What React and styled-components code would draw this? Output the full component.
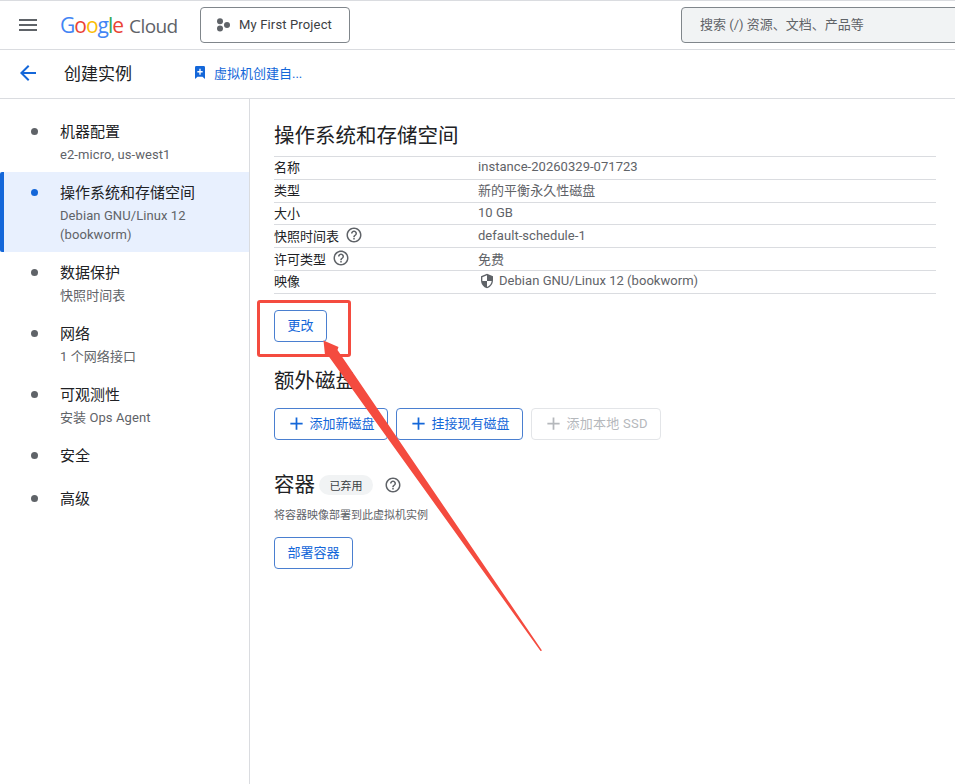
import styled, { createGlobalStyle } from "styled-components";

const FONT = `Roboto, "Noto Sans CJK SC", sans-serif`;
const BLUE = "#1467d9";

const sideItems = [
  { title: "机器配置", sub: ["e2-micro, us-west1"] },
  { title: "操作系统和存储空间", sub: ["Debian GNU/Linux 12", "(bookworm)"], active: true },
  { title: "数据保护", sub: ["快照时间表"] },
  { title: "网络", sub: ["1 个网络接口"] },
  { title: "可观测性", sub: ["安装 Ops Agent"] },
  { title: "安全" },
  { title: "高级" },
];

function HelpIcon() {
  return (
    <svg width="18" height="18" viewBox="0 0 24 24" fill="#5f6368">
      <path d="M11 18h2v-2h-2v2zm1-16C6.48 2 2 6.48 2 12s4.48 10 10 10 10-4.48 10-10S17.52 2 12 2zm0 18c-4.41 0-8-3.59-8-8s3.59-8 8-8 8 3.59 8 8-3.59 8-8 8zm0-14c-2.21 0-4 1.79-4 4h2c0-1.1.9-2 2-2s2 .9 2 2c0 2-3 1.75-3 5h2c0-2.25 3-2.5 3-5 0-2.21-1.79-4-4-4z" />
    </svg>
  );
}

function PlusIcon({ color }) {
  return (
    <PlusSvg viewBox="0 0 24 24" fill={color}>
      <path d="M19 13h-6v6h-2v-6H5v-2h6V5h2v6h6v2z" />
    </PlusSvg>
  );
}

function ShieldIcon() {
  return (
    <svg width="16" height="16" viewBox="0 0 24 24" fill="#5f6368">
      <path d="M12 1 3 5v6c0 5.55 3.84 10.74 9 12 5.16-1.26 9-6.45 9-12V5l-9-4zm0 10.99h7c-.53 4.12-3.28 7.79-7 8.94V12H5V6.3l7-3.11v8.8z" />
    </svg>
  );
}

export default function App() {
  return (
    <Page>
      <GlobalStyle />
      <TopBar>
        <MenuButton aria-label="menu">
          <svg width="18" height="12" viewBox="0 0 18 12" fill="#5f6368">
            <rect width="18" height="2" />
            <rect y="5" width="18" height="2" />
            <rect y="10" width="18" height="2" />
          </svg>
        </MenuButton>
        <Logo>
          <Letter $c="#4285f4">G</Letter>
          <Letter $c="#ea4335">o</Letter>
          <Letter $c="#fbbc04">o</Letter>
          <Letter $c="#4285f4">g</Letter>
          <Letter $c="#34a853">l</Letter>
          <Letter $c="#ea4335">e</Letter>
          <LogoCloud>Cloud</LogoCloud>
        </Logo>
        <ProjectButton>
          <svg width="14" height="14" viewBox="0 0 14 14" fill="#5f6368">
            <circle cx="4" cy="3.2" r="3" />
            <circle cx="4" cy="10.6" r="3" />
            <circle cx="11" cy="7" r="3" />
          </svg>
          My First Project
        </ProjectButton>
        <SearchBox>搜索 (/) 资源、文档、产品等</SearchBox>
      </TopBar>

      <SubBar>
        <BackIcon viewBox="0 0 24 24" fill={BLUE}>
          <path d="M20 11H7.83l5.59-5.59L12 4l-8 8 8 8 1.41-1.41L7.83 13H20v-2z" />
        </BackIcon>
        <PageTitle>创建实例</PageTitle>
        <TourLink>
          <svg width="10" height="13" viewBox="0 0 12 14" preserveAspectRatio="none" fill={BLUE}>
            <path d="M1.5 0h9A1.5 1.5 0 0 1 12 1.5V14l-3-2.4H3L0 14V1.5A1.5 1.5 0 0 1 1.5 0z" />
            <path d="M5.2 3h1.6v2.4h2.4V7H6.8v2.4H5.2V7H2.8V5.4h2.4z" fill="#fff" />
          </svg>
          虚拟机创建自...
        </TourLink>
      </SubBar>

      <Body>
        <Sidebar>
          {sideItems.map((item) => (
            <SideItem key={item.title} $active={item.active}>
              <Dot $active={item.active} />
              <div>
                <SideTitle>{item.title}</SideTitle>
                {item.sub && (
                  <SideSub>
                    {item.sub.map((line) => (
                      <div key={line}>{line}</div>
                    ))}
                  </SideSub>
                )}
              </div>
            </SideItem>
          ))}
        </Sidebar>

        <Main>
          <SectionHeading>操作系统和存储空间</SectionHeading>
          <InfoTable>
            <Row>
              <Label>名称</Label>
              <Value>instance-20260329-071723</Value>
            </Row>
            <Row>
              <Label>类型</Label>
              <Value>新的平衡永久性磁盘</Value>
            </Row>
            <Row>
              <Label>大小</Label>
              <Value>10 GB</Value>
            </Row>
            <Row>
              <Label>
                快照时间表 <HelpIcon />
              </Label>
              <Value>default-schedule-1</Value>
            </Row>
            <Row>
              <Label>
                许可类型 <HelpIcon />
              </Label>
              <Value>免费</Value>
            </Row>
            <Row>
              <Label>映像</Label>
              <ImageValue>
                <ShieldIcon />
                Debian GNU/Linux 12 (bookworm)
              </ImageValue>
            </Row>
          </InfoTable>

          <OutlineButton $mt="16px">更改</OutlineButton>

          <DiskHeading>额外磁盘</DiskHeading>
          <ButtonRow>
            <OutlineButton>
              <PlusIcon color={BLUE} />
              添加新磁盘
            </OutlineButton>
            <OutlineButton>
              <PlusIcon color={BLUE} />
              挂接现有磁盘
            </OutlineButton>
            <OutlineButton $disabled>
              <PlusIcon color="#b5b8bc" />
              <SsdText>添加本地 SSD</SsdText>
            </OutlineButton>
          </ButtonRow>

          <ContainerHead>
            <SectionTitle>容器</SectionTitle>
            <Badge>已弃用</Badge>
            <HelpIcon />
          </ContainerHead>
          <Hint>将容器映像部署到此虚拟机实例</Hint>
          <OutlineButton>部署容器</OutlineButton>
        </Main>
      </Body>

      <RedBox />
      <Arrow viewBox="0 0 955 784">
        <path
          d="M323.5 340.5 L338.5 347 L337.5 350 L542 650.5 L540.5 651 L328.5 356 L325 355 Z"
          fill="#f44b3f"
        />
      </Arrow>
    </Page>
  );
}

const GlobalStyle = createGlobalStyle`
  html, body {
    margin: 0;
    padding: 0;
    background: #fff;
    font-family: ${FONT};
    overflow: hidden;
  }
  * {
    box-sizing: border-box;
  }
`;

const Page = styled.div`
  position: relative;
  width: 955px;
  height: 784px;
  display: flex;
  flex-direction: column;
  border-top: 1px solid #dadce0;
  overflow: hidden;
`;

const TopBar = styled.header`
  height: 49px;
  flex: none;
  display: flex;
  align-items: center;
  border-bottom: 1px solid #dadce0;
`;

const MenuButton = styled.div`
  width: 56px;
  flex: none;
  padding-left: 19px;
  display: flex;
  align-items: center;
`;

const Logo = styled.div`
  width: 144px;
  flex: none;
  display: flex;
  align-items: baseline;
  font-size: 21px;
  font-family: "Open Sans", sans-serif;
  letter-spacing: -1px;
  padding-left: 4px;
`;

const Letter = styled.span`
  color: ${(p) => p.$c};
`;

const LogoCloud = styled.span`
  color: #5f6368;
  margin-left: 6px;
  font-size: 19px;
  letter-spacing: -0.6px;
`;

const ProjectButton = styled.div`
  width: 150px;
  height: 36px;
  flex: none;
  display: flex;
  align-items: center;
  gap: 9px;
  padding: 0 0 1px 15px;
  border: 1px solid #80868b;
  border-radius: 4px;
  font-size: 13px;
  letter-spacing: 0.15px;
  color: #3c4043;
`;

const SearchBox = styled.div`
  margin-left: 331px;
  width: 300px;
  height: 36px;
  flex: none;
  display: flex;
  align-items: center;
  padding: 0 0 4px 18px;
  background: #f1f3f4;
  border: 1px solid #80868b;
  border-radius: 4px;
  font-size: 13px;
  color: #5f6368;
`;

const SubBar = styled.div`
  height: 49px;
  flex: none;
  display: flex;
  align-items: center;
  padding-bottom: 3px;
  border-bottom: 1px solid #dadce0;
`;

const BackIcon = styled.svg`
  width: 24px;
  height: 24px;
  margin-left: 16px;
`;

const PageTitle = styled.h1`
  margin: 0 0 0 24px;
  width: 131px;
  font-size: 17px;
  font-weight: 400;
  color: #202124;
`;

const TourLink = styled.div`
  display: flex;
  align-items: center;
  gap: 9px;
  font-size: 13px;
  color: ${BLUE};
`;

const Body = styled.div`
  flex: 1;
  display: flex;
  min-height: 0;
`;

const Sidebar = styled.nav`
  width: 250px;
  flex: none;
  padding-top: 12px;
  border-right: 1px solid #dadce0;
`;

const SideItem = styled.div`
  position: relative;
  display: flex;
  min-height: 43px;
  padding: 11px 0 8px 60px;
  background: ${(p) => (p.$active ? "#e8f0fe" : "transparent")};
  border-left: ${(p) => (p.$active ? `4px solid ${BLUE}` : "none")};
  border-radius: ${(p) => (p.$active ? "2px 0 0 2px" : "0")};
  padding-left: ${(p) => (p.$active ? "56px" : "60px")};
`;

const Dot = styled.span`
  position: absolute;
  top: 17px;
  left: ${(p) => (p.$active ? "27px" : "31px")};
  width: 7px;
  height: 7px;
  border-radius: 50%;
  background: ${(p) => (p.$active ? BLUE : "#5f6368")};
`;

const SideTitle = styled.div`
  font-size: 15px;
  line-height: 20px;
  color: #202124;
`;

const SideSub = styled.div`
  margin-top: 3px;
  font-size: 13px;
  line-height: 19px;
  letter-spacing: 0.08px;
  color: #5f6368;
`;

const Main = styled.main`
  flex: 1;
  padding: 24px 19px 0 24px;
`;

const SectionTitle = styled.h2`
  margin: 0;
  font-size: 20.5px;
  line-height: 26px;
  font-weight: 400;
  color: #202124;
`;

const SectionHeading = styled(SectionTitle)`
  margin-bottom: 7px;
`;

const DiskHeading = styled(SectionTitle)`
  margin: 26px 0 14px;
`;

const InfoTable = styled.div`
  border-top: 1px solid #dadce0;
`;

const Row = styled.div`
  height: 22.8px;
  display: flex;
  align-items: center;
  padding-bottom: 2px;
  border-bottom: 1px solid #dadce0;
  font-size: 13px;
`;

const Label = styled.div`
  width: 204px;
  display: flex;
  align-items: center;
  gap: 6px;
  color: #202124;
`;

const Value = styled.div`
  color: #5f6368;
  letter-spacing: 0.04px;
`;

const ImageValue = styled(Value)`
  display: flex;
  align-items: center;
  gap: 4px;
  padding-left: 1px;
`;

const OutlineButton = styled.div`
  display: inline-flex;
  align-items: center;
  justify-content: center;
  gap: 4px;
  height: 32px;
  padding: 0 12.5px 3px;
  margin-top: ${(p) => p.$mt || "0"};
  border: 1px solid ${(p) => (p.$disabled ? "#e3e5e8" : "#4a7fd0")};
  border-radius: 4px;
  font-size: 13px;
  color: ${(p) => (p.$disabled ? "#b5b8bc" : BLUE)};
`;

const PlusSvg = styled.svg`
  width: 21px;
  height: 21px;
  margin: 3px -1.5px 0;
  flex: none;
`;

const SsdText = styled.span`
  letter-spacing: 0.25px;
`;

const ButtonRow = styled.div`
  display: flex;
  gap: 8px;
`;

const ContainerHead = styled.div`
  display: flex;
  align-items: center;
  margin-top: 32px;
  color: #5f6368;
`;

const Badge = styled.span`
  width: 54px;
  height: 20px;
  margin: 0 11px 0 4px;
  display: flex;
  align-items: center;
  justify-content: center;
  background: #f1f3f4;
  border-radius: 10px;
  font-size: 11px;
  color: #3c4043;
`;

const Hint = styled.p`
  margin: 10px 0 13px;
  font-size: 11px;
  line-height: 16px;
  color: #5f6368;
`;

const RedBox = styled.div`
  position: absolute;
  left: 257px;
  top: 299px;
  width: 94px;
  height: 57px;
  border: 3px solid #f44b3f;
  border-radius: 3px;
  pointer-events: none;
`;

const Arrow = styled.svg`
  position: absolute;
  left: 0;
  top: -1px;
  width: 955px;
  height: 784px;
  pointer-events: none;
`;
